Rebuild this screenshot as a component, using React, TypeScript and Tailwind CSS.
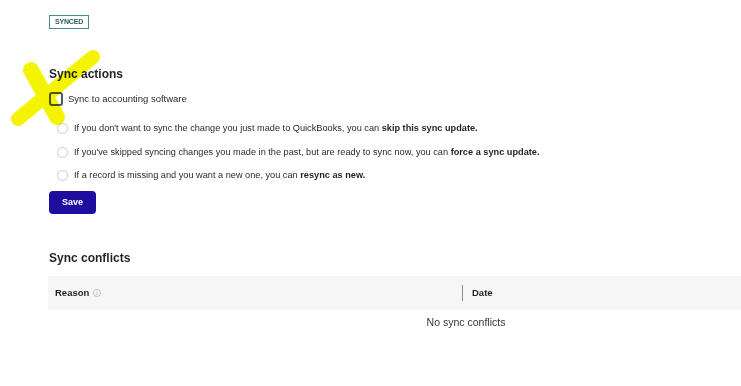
export default function App() {
  const options = [
    {
      text: "If you don't want to sync the change you just made to QuickBooks, you can ",
      bold: "skip this sync update.",
    },
    {
      text: "If you've skipped syncing changes you made in the past, but are ready to sync now, you can ",
      bold: "force a sync update.",
    },
    {
      text: "If a record is missing and you want a new one, you can ",
      bold: "resync as new.",
    },
  ];

  return (
    <div
      className="relative w-[741px] h-[386px] overflow-hidden bg-white text-[#1f2328]"
      style={{ fontFamily: '"Liberation Sans", Arial, sans-serif' }}
    >
      <div className="pl-[49px] pt-[15px]">
        <div className="flex">
          <span className="flex h-[14px] items-center border border-[#4c8b8b] px-[5px] text-[7px] font-bold tracking-tight text-[#2a5b5e]">
            SYNCED
          </span>
        </div>

        <h2 className="mt-[37px] text-[12px] font-bold leading-[16px]">Sync actions</h2>

        <label className="mt-[10px] flex items-center gap-[5px]">
          <span className="h-[14px] w-[14px] rounded-[3px] border-2 border-[#55595e] bg-white" />
          <span className="text-[9.5px] leading-[14px]">Sync to accounting software</span>
        </label>

        <div className="mt-[16px] flex flex-col gap-[10.5px] pl-[8px]">
          {options.map((o) => (
            <label key={o.bold} className="flex h-[13px] items-center gap-[6px]">
              <span className="h-[11px] w-[11px] rounded-full border border-[#c9cbcf] bg-white" />
              <span className="text-[9.2px] leading-[13px]">
                {o.text}
                <b>{o.bold}</b>
              </span>
            </label>
          ))}
        </div>

        <button className="mt-[9px] h-[23px] w-[47px] rounded-[4px] bg-[#1e0d9e] text-[9px] font-bold text-white">
          Save
        </button>

        <h2 className="mt-[36px] text-[12px] font-bold leading-[16px]">Sync conflicts</h2>

        <div className="-ml-px mt-[10px] w-[836px]">
          <div className="flex h-[34px] items-center bg-[#f6f6f7] text-[9.5px] font-bold">
            <div className="flex w-[414px] items-center gap-[4px] pl-[7px]">
              Reason
              <svg width="8" height="8" viewBox="0 0 8 8" className="text-[#b3b5b8]">
                <circle cx="4" cy="4" r="3.5" fill="none" stroke="currentColor" strokeWidth="0.8" />
                <path d="M4 3.4v2.6M4 2.1v0.6" stroke="currentColor" strokeWidth="0.8" />
              </svg>
            </div>
            <div className="h-[16px] w-px bg-[#8a8c90]" />
            <div className="pl-[9px]">Date</div>
          </div>
          <div className="flex h-[26px] items-center justify-center text-[10.5px] text-[#33373c]">
            No sync conflicts
          </div>
        </div>
      </div>

      <svg
        className="pointer-events-none absolute left-0 top-0 mix-blend-multiply"
        width="120"
        height="140"
        viewBox="0 0 120 140"
      >
        <path d="M18 119 L93 57" stroke="#f4f400" strokeWidth="14" strokeLinecap="round" fill="none" />
        <path d="M31 70 L57 117" stroke="#f4f400" strokeWidth="16" strokeLinecap="round" fill="none" />
      </svg>
    </div>
  );
}
